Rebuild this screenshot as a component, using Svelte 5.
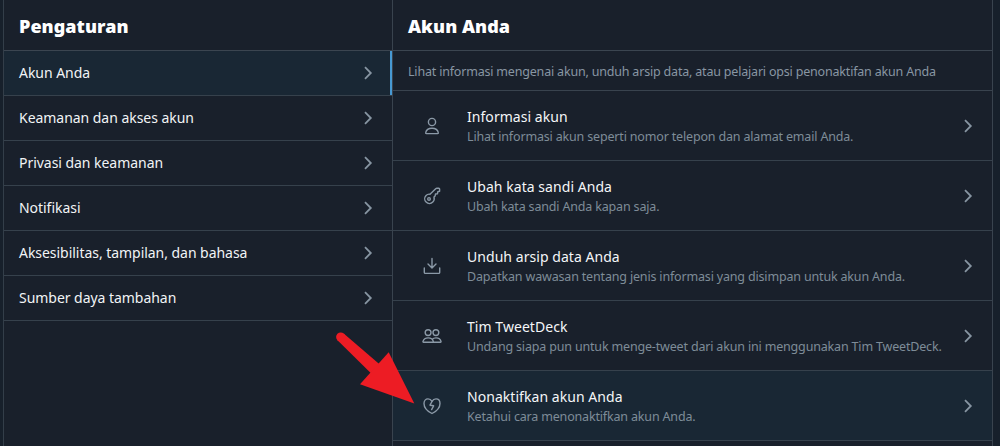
<script>
  const menu = [
    'Akun Anda',
    'Keamanan dan akses akun',
    'Privasi dan keamanan',
    'Notifikasi',
    'Aksesibilitas, tampilan, dan bahasa',
    'Sumber daya tambahan',
  ];

  const options = [
    { icon: 'person', title: 'Informasi akun', text: 'Lihat informasi akun seperti nomor telepon dan alamat email Anda.' },
    { icon: 'key', title: 'Ubah kata sandi Anda', text: 'Ubah kata sandi Anda kapan saja.' },
    { icon: 'download', title: 'Unduh arsip data Anda', text: 'Dapatkan wawasan tentang jenis informasi yang disimpan untuk akun Anda.' },
    { icon: 'people', title: 'Tim TweetDeck', text: 'Undang siapa pun untuk menge-tweet dari akun ini menggunakan Tim TweetDeck.' },
    { icon: 'heart', title: 'Nonaktifkan akun Anda', text: 'Ketahui cara menonaktifkan akun Anda.' },
  ];

  let selected = $state(0);
  let hovered = $state(4);
</script>

{#snippet chevron()}
  <svg class="chevron" viewBox="0 0 10 14"><path d="M2 1.2 7.8 7 2 12.8" /></svg>
{/snippet}

<div class="page">
  <nav class="sidebar">
    <h2>Pengaturan</h2>
    {#each menu as label, i}
      <button class="item" class:active={selected === i} onclick={() => (selected = i)}>
        <span>{label}</span>
        {@render chevron()}
      </button>
    {/each}
  </nav>

  <main class="detail">
    <h2>Akun Anda</h2>
    <p class="intro">Lihat informasi mengenai akun, unduh arsip data, atau pelajari opsi penonaktifan akun Anda</p>
    {#each options as option, i}
      <button class="option" class:active={hovered === i} onmouseenter={() => (hovered = i)}>
        <svg class="icon" viewBox="0 0 20 20">
          {#if option.icon === 'person'}
            <circle cx="10" cy="6" r="3.6" />
            <path d="M4.4 17.6h11.2q.9 0 .7-.9c-.6-3.2-3-4.5-6.3-4.5s-5.7 1.3-6.3 4.5q-.2.9.7.9z" />
          {:else if option.icon === 'key'}
            <path d="M8 8.2 13.7 2.7q.5-.5 1.2-.5h1.9q.8 0 .8.8v2.3l-1.8.4-.3 2-2 .3-.4 1.9-1.1 1.1c.5 1.9.1 3.8-1.2 5.1a4.7 4.7 0 0 1-6.7-6.7c1.1-1.1 2.4-1.5 3.9-1.2z" />
            <circle cx="7" cy="12.9" r="1.3" />
          {:else if option.icon === 'download'}
            <path d="M10 2.5v9.3M6 8l4 4 4-4M2.3 12v4.4q0 1 1 1h13.4q1 0 1-1V12" />
          {:else if option.icon === 'people'}
            <circle cx="6.1" cy="6.6" r="2.9" />
            <circle cx="13.9" cy="6.6" r="2.9" />
            <path d="M1.5 16.2h9.3q.7 0 .5-.8c-.6-2.4-2.4-3.5-5.1-3.5s-4.5 1.1-5.2 3.5q-.2.8.5.8zM10.2 13.2c.9-.9 2.2-1.3 3.8-1.3 2.7 0 4.4 1.1 5 3.5q.2.8-.5.8h-7.7" />
          {:else}
            <path d="M10 17.5C5.7 15.3 2 11.6 2 7.4 2 4.7 3.8 2.9 6 2.9c1.7 0 3.1.9 4 2.6.9-1.7 2.3-2.6 4-2.6 2.2 0 4 1.8 4 4.5 0 4.2-3.7 7.9-8 10.1z" />
            <path d="M10 5.5 8 9.2l3.6.6-2 3.8" />
          {/if}
        </svg>
        <span class="copy">
          <span class="title">{option.title}</span>
          <span class="text">{option.text}</span>
        </span>
        {@render chevron()}
      </button>
    {/each}
  </main>

  <svg class="pointer" viewBox="0 0 80 77">
    <circle cx="5.7" cy="10" r="4.6" />
    <polygon points="8.7,6.4 44.5,37.3 35.7,46 2.5,13.3" />
    <polygon points="53.7,25.3 79.3,76.5 25,57.3" />
  </svg>
</div>

<style>
  :global(body) { margin: 0; background: #17202b; overflow: hidden; }
  .page { position: relative; box-sizing: border-box; height: 446px; padding: 0 7px 0 3px; display: flex; overflow: hidden; background: #17202b; font-family: "Noto Sans", "Open Sans", sans-serif; }
  .sidebar { box-sizing: border-box; width: 389px; border-left: 1px solid #333e49; background: #19202b; }
  .detail { box-sizing: border-box; width: 601px; border: solid #39434e; border-width: 0 1px; background: #19202b; }
  h2 { box-sizing: border-box; height: 51px; margin: 0; padding: 2px 15px 0; border-bottom: 1px solid #3b4550; color: #fff; font-size: 18px; font-weight: 900; line-height: 48px; letter-spacing: 0.05px; }
  button { box-sizing: border-box; width: 100%; margin: 0; border: 0; border-bottom: 1px solid #36414c; background: transparent; font-family: inherit; text-align: left; display: flex; align-items: center; cursor: pointer; }
  .item { height: 45px; padding: 0 19px 0 15px; justify-content: space-between; color: #f1f4f6; font-size: 14px; letter-spacing: -0.04px; }
  .item span { padding-bottom: 2px; }
  .active { background: #192734; }
  .item.active { box-shadow: inset -2px 0 #4799d3; }
  .intro { box-sizing: border-box; height: 40px; margin: 0; padding: 0 15px; border-bottom: 1px solid #39434e; color: #8896a3; font-size: 12.5px; line-height: 41px; letter-spacing: -0.19px; white-space: nowrap; }
  .option { height: 70px; padding: 0 19px 0 29px; }
  .icon { width: 20px; height: 20px; margin-right: 25px; flex: none; fill: none; stroke: #8b99a7; stroke-width: 1.4; stroke-linecap: round; stroke-linejoin: round; }
  .copy { flex: 1; padding-top: 2px; display: flex; flex-direction: column; white-space: nowrap; }
  .title { color: #f4f6f8; font-size: 14px; line-height: 20px; letter-spacing: 0.05px; }
  .text { color: #7e8c98; font-size: 12.5px; line-height: 19px; letter-spacing: -0.17px; }
  .chevron { width: 10px; height: 14px; flex: none; fill: none; stroke: #8795a2; stroke-width: 1.8; }
  .pointer { position: absolute; left: 335px; top: 327px; width: 80px; height: 77px; fill: #ed1c24; pointer-events: none; }
</style>
